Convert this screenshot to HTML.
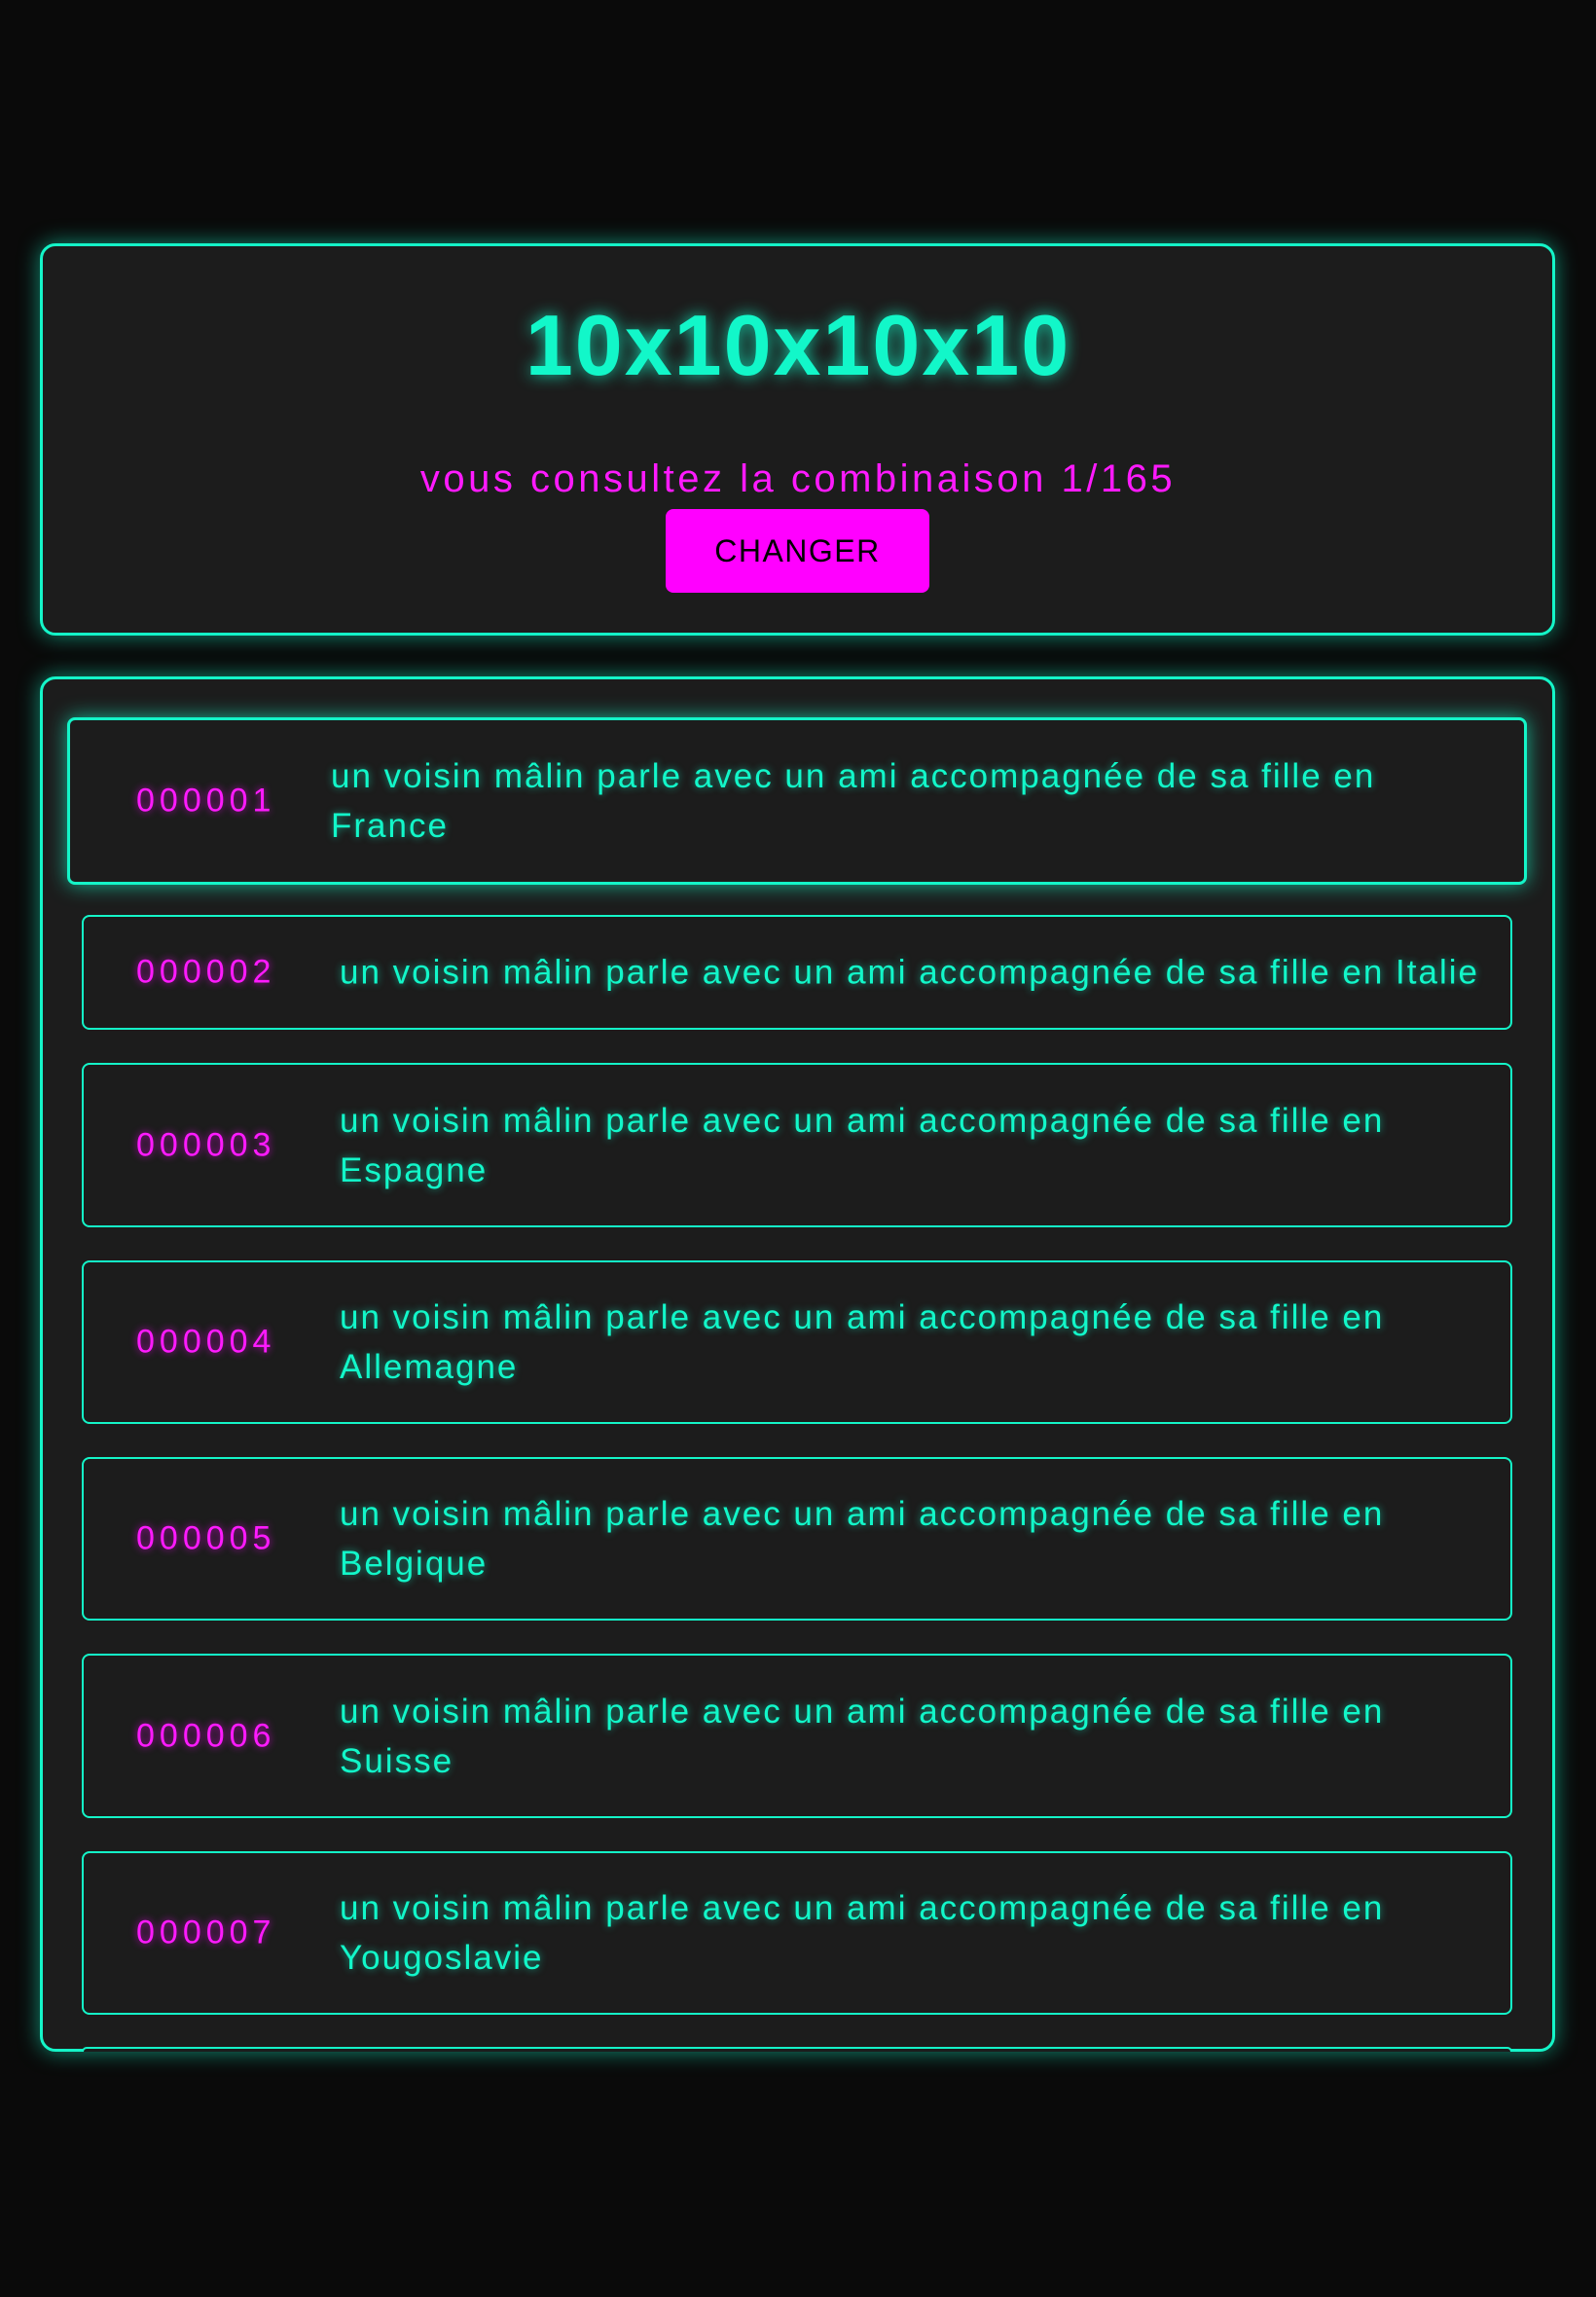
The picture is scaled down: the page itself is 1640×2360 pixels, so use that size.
<!DOCTYPE html>
<html><head><meta charset="utf-8"><style>
*{margin:0;padding:0;box-sizing:border-box}
body{width:1640px;height:2360px;background:#0a0a0a;font-family:"Liberation Sans",sans-serif;position:relative;overflow:hidden}
.panel{position:absolute;left:41px;width:1557px;background:#1c1c1c;border:3px solid #14f5c8;border-radius:16px;box-shadow:0 0 22px rgba(20,245,200,.55)}
.title{position:absolute;left:0;right:0;top:304px;text-align:center;font-weight:bold;font-size:88px;letter-spacing:2px;color:#12f7c9;text-shadow:0 0 16px rgba(18,247,201,.8)}
.sub{position:absolute;left:0;right:0;top:470px;text-align:center;font-size:40px;letter-spacing:3.5px;color:#ff1aff}
.btn{position:absolute;left:684px;top:523px;width:271px;height:86px;background:#ff00ff;border-radius:8px;color:#000;font-size:32px;line-height:86px;text-align:center;letter-spacing:1.5px}
.item{position:absolute;left:84px;width:1470px;border:2px solid #14f5c8;border-radius:8px;background:#1c1c1c}
.item.hl{left:69px;width:1500px;border:3px solid #14f5c8;box-shadow:0 0 20px rgba(20,245,200,.7)}
.num{position:absolute;left:54px;top:50%;transform:translateY(-50%);font-size:34px;color:#ff1aff;letter-spacing:5px;text-shadow:0 0 8px rgba(255,0,255,.7)}
.txt{position:absolute;left:263px;top:50%;transform:translateY(-50%);font-size:35px;line-height:51px;color:#12f7c9;white-space:nowrap;letter-spacing:2px;text-shadow:0 0 8px rgba(18,247,201,.6)}
.hl .txt{left:268px}
.hl .num{left:68px}
</style></head><body>
<div class="panel" style="top:250px;height:403px"></div>
<div class="title">10x10x10x10</div>
<div class="sub">vous consultez la combinaison 1/165</div>
<div class="btn">CHANGER</div>
<div class="panel" style="top:695px;height:1413px;overflow:hidden"></div>
<div class="item hl" style="top:737px;height:172px"><div class="num">000001</div><div class="txt">un voisin mâlin parle avec un ami accompagnée de sa fille en<br>France</div></div>
<div class="item" style="top:940px;height:118px"><div class="num">000002</div><div class="txt">un voisin mâlin parle avec un ami accompagnée de sa fille en Italie</div></div>
<div class="item" style="top:1092px;height:169px"><div class="num">000003</div><div class="txt">un voisin mâlin parle avec un ami accompagnée de sa fille en<br>Espagne</div></div>
<div class="item" style="top:1295px;height:168px"><div class="num">000004</div><div class="txt">un voisin mâlin parle avec un ami accompagnée de sa fille en<br>Allemagne</div></div>
<div class="item" style="top:1497px;height:168px"><div class="num">000005</div><div class="txt">un voisin mâlin parle avec un ami accompagnée de sa fille en<br>Belgique</div></div>
<div class="item" style="top:1699px;height:169px"><div class="num">000006</div><div class="txt">un voisin mâlin parle avec un ami accompagnée de sa fille en<br>Suisse</div></div>
<div class="item" style="top:1902px;height:168px"><div class="num">000007</div><div class="txt">un voisin mâlin parle avec un ami accompagnée de sa fille en<br>Yougoslavie</div></div>
<div class="item" style="top:2103px;height:5px;border-bottom:none;border-radius:8px 8px 0 0"></div>
</body></html>
